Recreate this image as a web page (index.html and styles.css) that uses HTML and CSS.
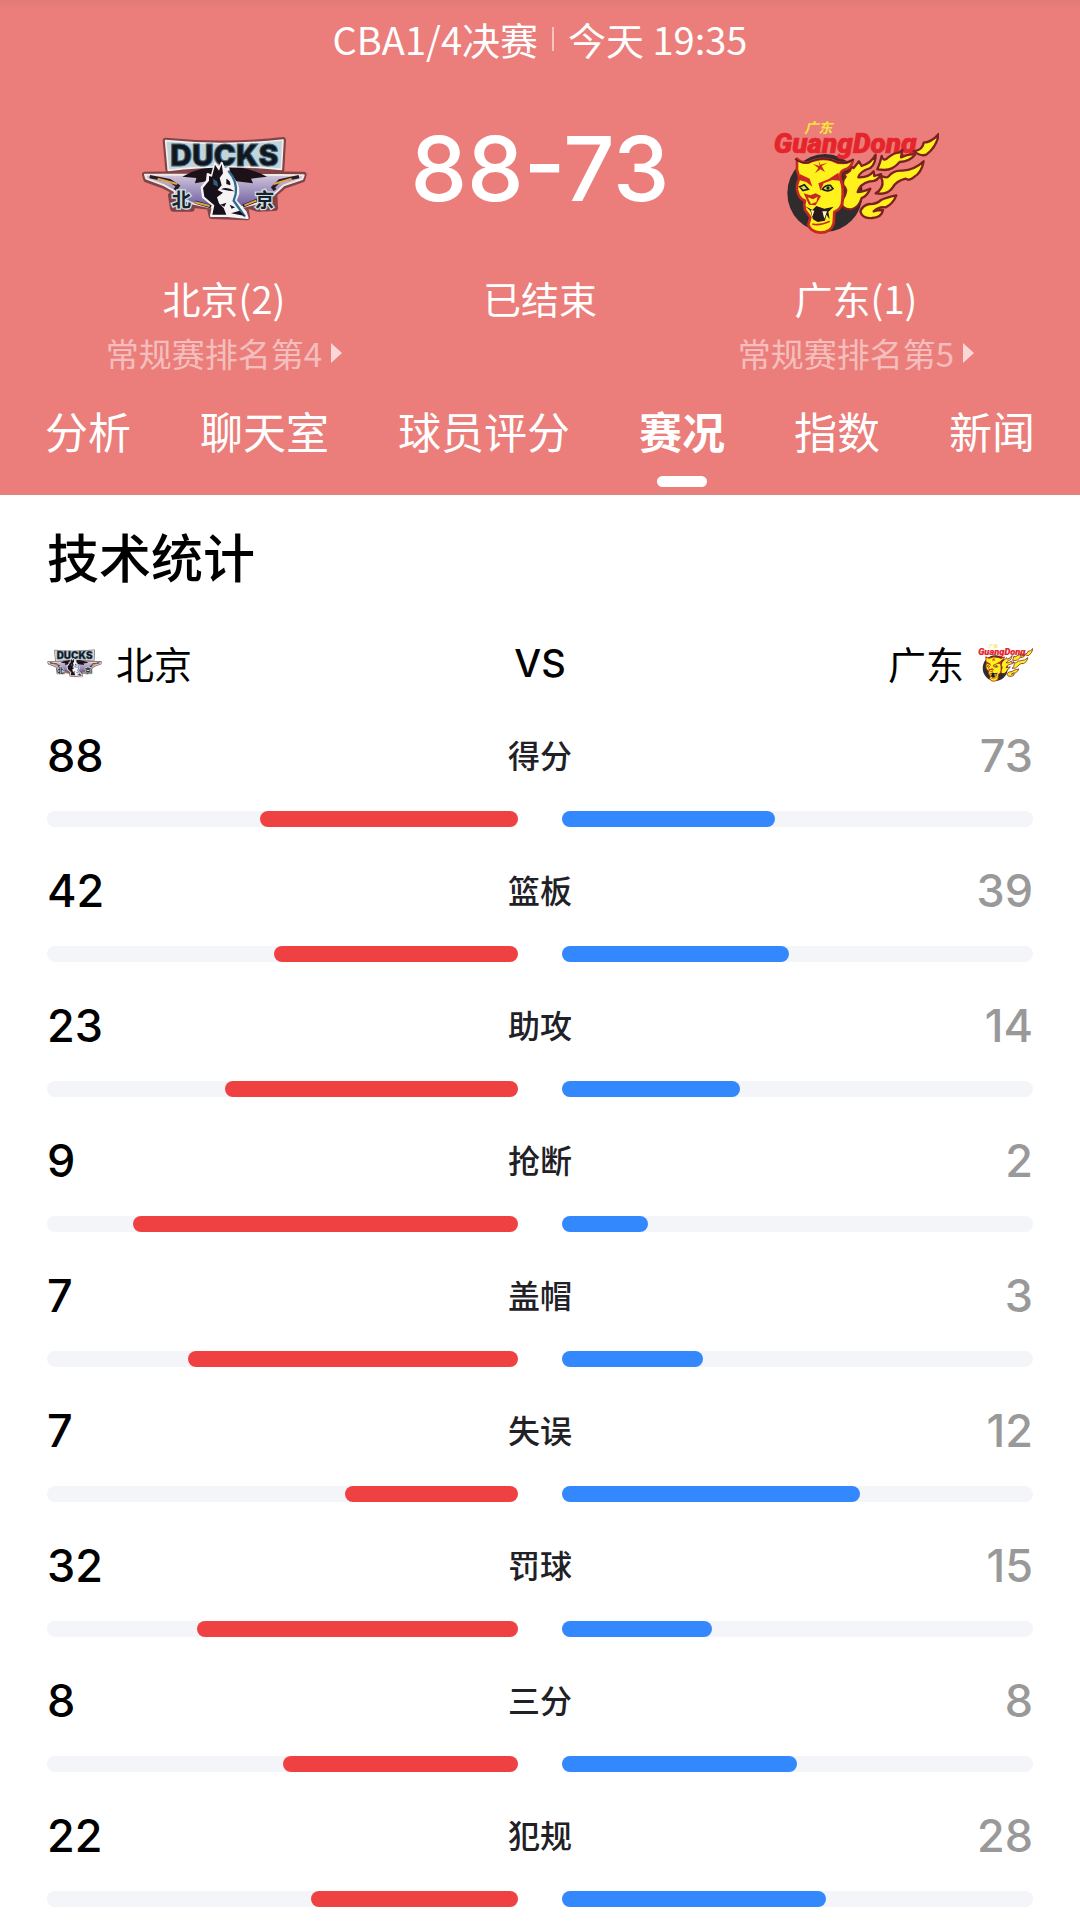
FILE: index.html
```html
<!DOCTYPE html>
<html lang="zh-CN">
<head>
<meta charset="utf-8">
<meta name="viewport" content="width=device-width, initial-scale=1">
<title>北京 88-73 广东</title>
<link rel="stylesheet" href="styles.css">
</head>
<body>
<svg class="sprite" aria-hidden="true">
  <defs>
    <linearGradient id="wing" x1="0" y1="0" x2="0" y2="1">
      <stop offset="0" stop-color="#e9dfe8"/>
      <stop offset="1" stop-color="#6a5ba0"/>
    </linearGradient>
  </defs>
  <symbol id="ducks" viewBox="34 -42 498 498">
    <!-- outer rim -->
    <g fill="#5c3038" stroke="#5c3038" stroke-width="18" stroke-linejoin="round" opacity=".75">
      <path d="M108 92Q285 110 460 90L455 180L382 192L522 194L518 208L462 228L434 252L436 294L384 296L346 284L352 322L246 318L240 290L188 284L186 296L130 296L124 256L136 244L104 228L50 208L46 194L190 192L116 180Z"/>
    </g>
    <path d="M46 194L190 194Q285 150 382 194L522 196L518 207L462 226L434 252L400 276L336 292L240 292L186 280L134 254L136 244L104 226L50 206Z" fill="url(#wing)" stroke="#f3e9e4" stroke-width="6" stroke-linejoin="round"/>
    <path d="M60 200L120 212L145 228L136 240M508 200L450 212L430 232L436 240M196 276L244 290M340 288L384 270" fill="none" stroke="#2a1a22" stroke-width="10"/>
    <path d="M84 206L142 222M486 206L432 222M196 277L240 288M344 286L380 272" fill="none" stroke="#dfa544" stroke-width="6"/>
    <path d="M158 200Q210 168 285 168Q350 168 412 200L364 206L370 220L320 214L230 214L196 220L200 204Z" fill="#1c1118"/>
    <path d="M108 92Q285 110 460 90L455 178Q285 160 116 181Z" fill="#c3d3db" stroke="#f3efee" stroke-width="5" stroke-linejoin="round"/>
    <text class="ducks-word" x="284" y="169" text-anchor="middle">DUCKS</text>
    <g class="ducks-city"><text x="126" y="290">北</text><text x="376" y="290">京</text></g>
    <!-- duck head -->
    <path d="M246 198L256 160L268 178L276 158L284 178L296 174L300 196Q328 216 326 250L318 272L348 306L354 324L294 318L244 318L250 286L220 262L216 232L232 212L234 192Z" fill="#f6f3f4" stroke="#f6f3f4" stroke-width="6" stroke-linejoin="round"/>
    <path d="M247 200L256 164L268 182L276 162L280 190L270 204L276 226L264 240L280 248L262 262L268 280L282 294L290 314L248 314L254 286L224 260L220 234L238 212L238 198Z" fill="#17101a"/>
    <path d="M296 182Q324 214 318 252L312 272L346 320" fill="none" stroke="#2e6c92" stroke-width="7"/>
    <path d="M290 206Q304 212 302 226L290 222ZM274 238Q292 228 314 244L298 242ZM272 284L290 278L284 290ZM300 284L316 292L306 296ZM304 310L330 302L346 318Z" fill="#17101a"/>
    <path d="M250 206L262 214L266 230L252 224Z" fill="#2b607e"/>
  </symbol>
  <symbol id="tiger" viewBox="40 -42 498 498">
    <text class="tiger-city" x="134" y="70">广东</text>
    <ellipse cx="196" cy="249" rx="113" ry="117" fill="#302b2d"/>
    <text class="tiger-word" x="42" y="128">GuangDong</text>
    <g fill="#fff21c" stroke="#7b211f" stroke-width="7" stroke-linejoin="round">
      <path d="M353 178Q362 158 366 138Q372 158 386 142Q404 128 418 128L428 120L424 142Q450 130 466 134Q450 154 420 156Q400 180 374 180Z"/>
      <path d="M462 124Q490 120 492 98Q516 96 537 72Q532 110 500 134Q484 140 462 124Z"/>
      <path d="M348 250Q372 236 368 212L362 196Q378 206 386 200Q400 180 428 182Q464 180 492 154Q486 188 462 202Q448 214 438 206Q410 212 398 234Q382 256 348 250Z"/>
      <path d="M302 304Q310 284 330 282Q348 284 364 270Q380 262 410 256Q400 282 378 292Q358 288 342 304Q350 300 370 300Q366 322 338 324Q308 328 302 304Z"/>
      <path d="M248 288Q246 270 256 256Q264 238 252 228Q246 214 258 200L252 192Q278 186 272 168L282 174L298 154L306 168Q334 160 348 134Q348 162 332 174Q300 184 296 202Q326 204 342 184L344 198L364 192Q354 216 330 214Q300 222 294 246Q310 246 332 236Q322 258 306 264Q298 292 276 298Q258 300 248 288Z"/>
    </g>
    <!-- face -->
    <path d="M112 146Q128 160 146 158Q180 140 216 150Q248 168 280 150Q276 174 252 180Q238 184 244 212Q252 232 248 270Q248 296 224 306L222 340Q214 368 182 368Q152 366 146 344L152 322L136 300Q132 284 136 272Q118 268 112 240Q110 224 118 206Q116 188 112 180Z" fill="#fff21c" stroke="#c72822" stroke-width="8" stroke-linejoin="round"/>
    <path d="M106 146Q124 162 146 158Q180 140 216 150Q252 168 282 148" fill="none" stroke="#4a2023" stroke-width="4"/>
    <path d="M176 150L180 168L160 162L176 174L166 190L182 178L196 186L186 168L204 158L182 164ZM120 192L150 206L158 230L140 216L118 210ZM236 188L206 208L176 220L182 242L192 220L218 210L242 212ZM132 250L152 256L168 250L184 258L168 286L148 284Z" fill="#c72822"/>
    <path d="M188 238Q196 224 212 226L220 236Q208 248 188 238ZM120 230L134 224L146 238L130 242Z" fill="#d9e35a" stroke="#211b1b" stroke-width="5"/>
    <circle cx="205" cy="234" r="5" fill="#211b1b"/>
    <path d="M144 262L160 268L174 260L170 276L154 282Z" fill="#fff21c"/>
    <path d="M136 288L158 300L170 288L194 296L222 290L206 306L210 328L200 314L196 332L174 336L160 328L152 302Z" fill="#28191b"/>
    <path d="M154 300L164 302L158 320ZM188 304L202 304L194 326Z" fill="#fff8c8"/>
    <path d="M158 342Q180 348 210 334" fill="none" stroke="#c72822" stroke-width="5"/>
  </symbol>
</svg>

<header class="match">
  <p class="match-info"><span>CBA1/4决赛</span><i class="divider"></i><span>今天 19:35</span></p>
  <section class="scoreboard">
    <div class="side">
      <svg class="logo" role="img" aria-label="北京队徽"><use href="#ducks"/></svg>
      <h2 class="name">北京(2)</h2>
      <a class="rank" href="#">常规赛排名第4<svg class="arrow" viewBox="0 0 11 20" aria-hidden="true"><path d="M0 0L11 10L0 20Z"/></svg></a>
    </div>
    <div class="side">
      <p class="score">88-73</p>
      <p class="name">已结束</p>
    </div>
    <div class="side">
      <svg class="logo" role="img" aria-label="广东队徽"><use href="#tiger"/></svg>
      <h2 class="name">广东(1)</h2>
      <a class="rank" href="#">常规赛排名第5<svg class="arrow" viewBox="0 0 11 20" aria-hidden="true"><path d="M0 0L11 10L0 20Z"/></svg></a>
    </div>
  </section>
  <nav class="tabs">
    <a href="#">分析</a>
    <a href="#">聊天室</a>
    <a href="#">球员评分</a>
    <a class="active" href="#" aria-current="page">赛况</a>
    <a href="#">指数</a>
    <a href="#">新闻</a>
  </nav>
</header>

<main class="stats">
  <h1 class="heading">技术统计</h1>
  <div class="teams">
    <span class="team"><svg class="badge" aria-hidden="true"><use href="#ducks"/></svg>北京</span>
    <span class="vs">VS</span>
    <span class="team away"><svg class="badge" aria-hidden="true"><use href="#tiger"/></svg>广东</span>
  </div>
  <ul class="rows">
    <li class="row"><b class="home-value">88</b><span class="label">得分</span><b class="away-value">73</b><div class="bar home"><i style="width:54.7%"></i></div><div class="bar guest"><i style="width:45.3%"></i></div></li>
    <li class="row"><b class="home-value">42</b><span class="label">篮板</span><b class="away-value">39</b><div class="bar home"><i style="width:51.9%"></i></div><div class="bar guest"><i style="width:48.1%"></i></div></li>
    <li class="row"><b class="home-value">23</b><span class="label">助攻</span><b class="away-value">14</b><div class="bar home"><i style="width:62.2%"></i></div><div class="bar guest"><i style="width:37.8%"></i></div></li>
    <li class="row"><b class="home-value">9</b><span class="label">抢断</span><b class="away-value">2</b><div class="bar home"><i style="width:81.8%"></i></div><div class="bar guest"><i style="width:18.2%"></i></div></li>
    <li class="row"><b class="home-value">7</b><span class="label">盖帽</span><b class="away-value">3</b><div class="bar home"><i style="width:70%"></i></div><div class="bar guest"><i style="width:30%"></i></div></li>
    <li class="row"><b class="home-value">7</b><span class="label">失误</span><b class="away-value">12</b><div class="bar home"><i style="width:36.8%"></i></div><div class="bar guest"><i style="width:63.2%"></i></div></li>
    <li class="row"><b class="home-value">32</b><span class="label">罚球</span><b class="away-value">15</b><div class="bar home"><i style="width:68.1%"></i></div><div class="bar guest"><i style="width:31.9%"></i></div></li>
    <li class="row"><b class="home-value">8</b><span class="label">三分</span><b class="away-value">8</b><div class="bar home"><i style="width:50%"></i></div><div class="bar guest"><i style="width:50%"></i></div></li>
    <li class="row"><b class="home-value">22</b><span class="label">犯规</span><b class="away-value">28</b><div class="bar home"><i style="width:44%"></i></div><div class="bar guest"><i style="width:56%"></i></div></li>
  </ul>
</main>
</body>
</html>
```
FILE: styles.css
```css
* {
  box-sizing: border-box;
  margin: 0;
  padding: 0;
}

body {
  background: #fff;
  color: #000;
  font-family: "Noto Sans CJK SC", sans-serif;
  font-size: 38px;
}

a {
  color: inherit;
  text-decoration: none;
}

.sprite {
  position: absolute;
  width: 0;
  height: 0;
}

/* Match header */
.match {
  padding: 12px 0 6px;
  background: linear-gradient(#e27a77, #eb7e7b 10px);
  border-bottom: 2px solid #dc8380;
  color: #fff;
}

.match-info {
  display: flex;
  justify-content: center;
  align-items: center;
  gap: 14px;
  line-height: 54px;
}

.divider {
  width: 2px;
  height: 24px;
  background: rgba(255, 255, 255, .55);
}

.scoreboard {
  display: grid;
  grid-template-columns: repeat(3, 1fr);
  margin-top: 30px;
  padding: 0 66px;
}

.side {
  display: flex;
  flex-direction: column;
  align-items: center;
}

.logo {
  width: 166px;
  height: 166px;
}

.score {
  height: 166px;
  font-family: Inter, sans-serif;
  font-size: 90px;
  font-weight: 500;
  line-height: 146px;
}

.name {
  margin-top: 9px;
  font-size: 38px;
  font-weight: 400;
  line-height: 54px;
}

.rank {
  display: flex;
  align-items: center;
  gap: 9px;
  margin-top: 4px;
  color: rgba(255, 255, 255, .5);
  font-size: 33px;
  line-height: 48px;
}

.arrow {
  width: 11px;
  height: 20px;
  fill: rgba(255, 255, 255, .7);
}

.tabs {
  display: flex;
  justify-content: space-between;
  margin-top: 23px;
  padding: 0 45px;
  font-size: 43px;
  line-height: 60px;
}

.tabs a {
  display: flex;
  flex-direction: column;
  align-items: center;
  gap: 16px;
}

.tabs a::after {
  content: "";
  width: 50px;
  height: 11px;
  border-radius: 6px;
}

.tabs .active {
  font-weight: 700;
}

.tabs .active::after {
  background: #fff;
}

/* Lettering inside the team logos */
.ducks-word {
  fill: #12161d;
  stroke: #3e6478;
  stroke-width: 3px;
  font-family: Inter, sans-serif;
  font-size: 90px;
  font-weight: 900;
}

.ducks-city {
  fill: #17232c;
  stroke: #cfdde0;
  stroke-width: 8px;
  paint-order: stroke;
  font-size: 58px;
  font-weight: 700;
}

.tiger-city {
  fill: #f8e33a;
  font-size: 42px;
  font-style: italic;
  font-weight: 700;
}

.tiger-word {
  fill: #e6242b;
  stroke: #e6242b;
  stroke-width: 2px;
  font-family: Roboto, sans-serif;
  font-size: 84px;
  font-style: italic;
  font-weight: 900;
}

/* Team statistics */
.stats {
  padding: 25px 47px 22px;
}

.heading {
  font-size: 52px;
  font-weight: 500;
  line-height: 72px;
}

.teams {
  display: grid;
  grid-template-columns: 1fr auto 1fr;
  align-items: center;
  margin-top: 43px;
  line-height: 56px;
}

.team {
  display: flex;
  align-items: center;
  gap: 14px;
}

.away {
  flex-direction: row-reverse;
}

.badge {
  width: 55px;
  height: 55px;
}

.vs {
  font-family: Inter, sans-serif;
  font-weight: 500;
}

.rows {
  display: grid;
  gap: 36px;
  margin-top: 37px;
  list-style: none;
}

.row {
  display: grid;
  grid-template-columns: repeat(6, 1fr);
  row-gap: 27px;
  column-gap: 44px;
  line-height: 56px;
}

.home-value,
.away-value,
.label {
  grid-column: span 2;
}

.home-value,
.away-value {
  font-family: Inter, sans-serif;
  font-size: 45px;
  font-weight: 500;
}

.away-value {
  color: #999;
  text-align: right;
}

.label {
  color: #1f2126;
  font-size: 32px;
  font-weight: 500;
  line-height: 52px;
  text-align: center;
}

.bar {
  display: flex;
  grid-column: span 3;
  height: 16px;
  border-radius: 8px;
  background: #f4f5f9;
}

.bar i {
  border-radius: 8px;
}

.home {
  justify-content: flex-end;
}

.home i {
  background: #f04142;
}

.guest i {
  background: #3388fd;
}
```
